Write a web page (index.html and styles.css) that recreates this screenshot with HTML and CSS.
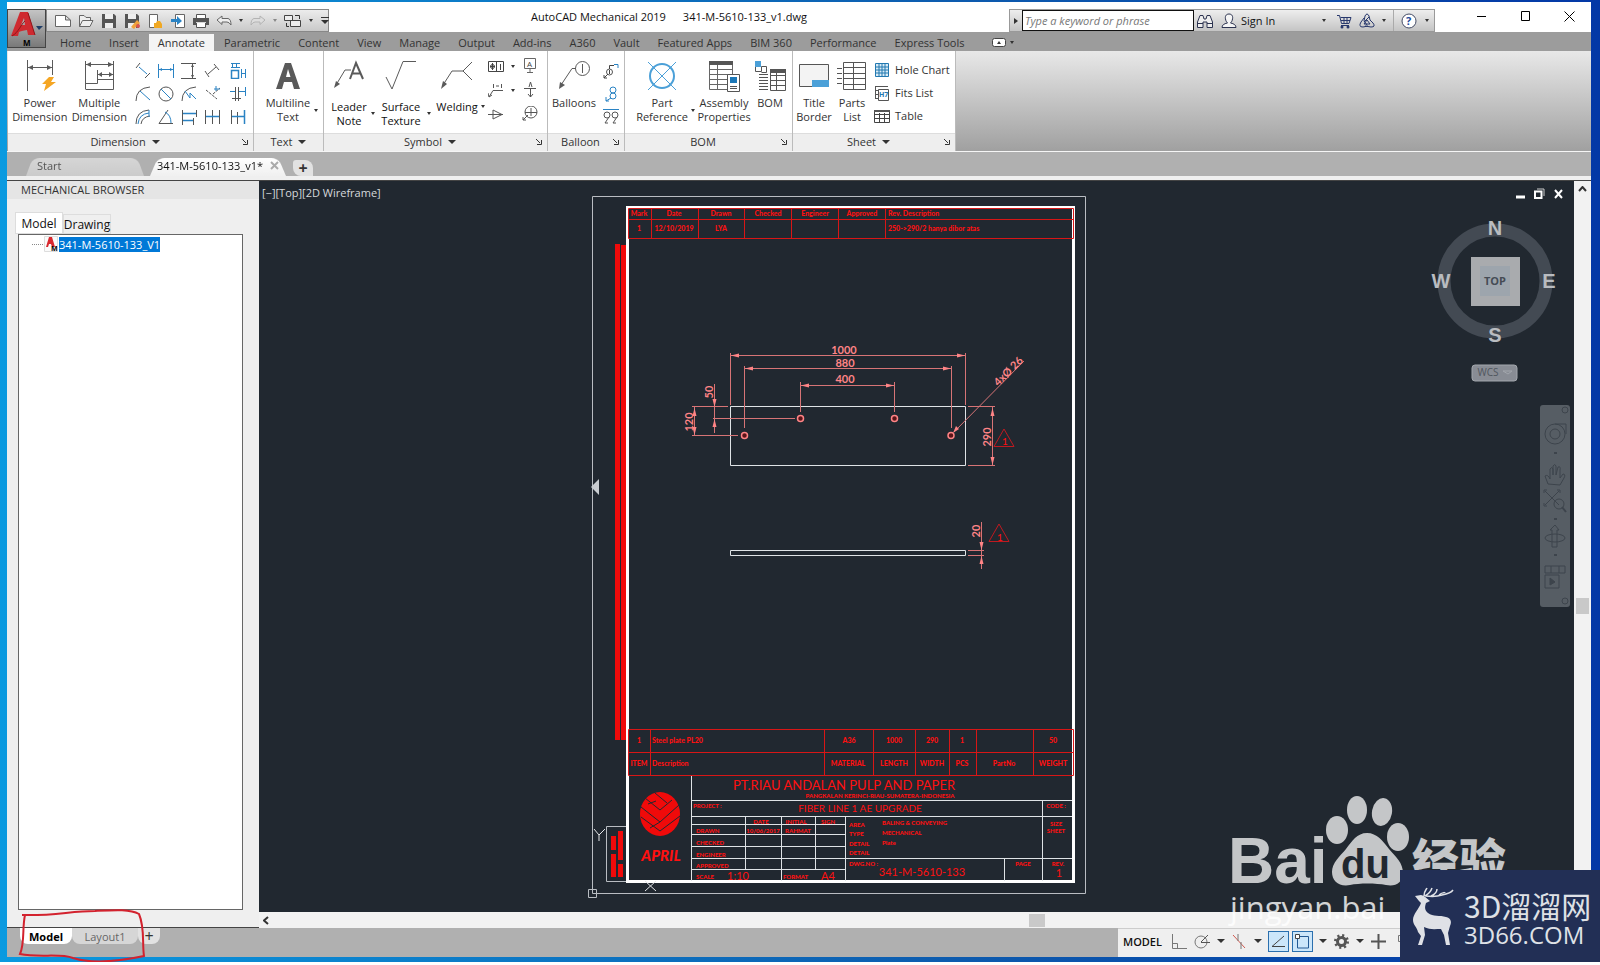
FILE: index.html
```html
<!DOCTYPE html>
<html lang="en">

<head>
    <meta charset="utf-8">
    <meta name="viewport" content="width=device-width, initial-scale=1">
    <title>AutoCAD Mechanical 2019 - 341-M-5610-133_v1.dwg</title>
    <link rel="stylesheet" href="styles.css">
</head>

<body>
    <div class="desktop">
        <div class="window">

            <!-- title bar -->
            <header class="titlebar">
                <button class="app-btn" aria-label="Application menu">
                    <svg width="39" height="39" viewBox="0 0 39 39">
                        <path d="M4 27 L13 3 H21 L28 26 H21 L20 21 C16 22 13 22 12 23 L11 27 Z M14 16 H18 L17 9 Z" fill="#cf2a30" fill-rule="evenodd"/>
                        <path d="M5 27 C12 23 14 15 18 12 M21 4 L28 26" stroke="#8e1519" fill="none"/>
                        <path d="M29 17 H36 L32 21 Z" fill="#1f3c66"/>
                        <text x="16" y="37" font-size="8" font-weight="bold">M</text>
                    </svg>
                </button>
                <div class="qat">
                    <button aria-label="New"><svg width="16" height="16" viewBox="0 0 16 16"><path d="M.5 2.500 H10.500 L15.500 7 V13.500 H.5 Z M10.500 2.500 V7 H15.500" fill="#fff" stroke="#666"/></svg></button>
                    <button aria-label="Open"><svg width="16" height="16" viewBox="0 0 16 16"><path d="M1.500 13.500 V2.500 H6 L8 4.500 H12.500 V7 M1.500 13.500 L4.500 7.500 H15 L12 13.500 Z" fill="#eee" stroke="#666"/></svg></button>
                    <button aria-label="Save"><svg width="16" height="16" viewBox="0 0 16 16"><path d="M1 1 H13 L15 3 V15 H1 Z" fill="#555"/><path d="M4 1 H12 V6 H4 Z M4 10 H12 V15 H4 Z" fill="#eee"/></svg></button>
                    <button aria-label="Save as"><svg width="16" height="16" viewBox="0 0 16 16"><path d="M1 1 H13 L15 3 V15 H1 Z" fill="#555"/><path d="M4 1 H12 V6 H4 Z M4 10 H12 V15 H4 Z" fill="#eee"/><path d="M7 14 L13 7 L16 10 L10 16 Z" fill="#f0a23c"/><circle cx="14" cy="13" r="2" fill="#d9534f"/></svg></button>
                    <button aria-label="Open from web"><svg width="16" height="16" viewBox="0 0 16 16"><path d="M2.500 1.500 H10.500 V14.500 H2.500 Z" fill="#fff" stroke="#666"/><path d="M7 10 H9 L10 8 H13 L15 11 V15 H7 Z" fill="#f0a823"/></svg></button>
                    <button aria-label="Save to mobile"><svg width="16" height="16" viewBox="0 0 16 16"><path d="M5.500 1.500 H14.500 V14.500 H5.500 Z" fill="#fff" stroke="#666"/><path d="M1 6 H7 V3 L12 8 L7 12 V9 H1 Z" fill="#2a83c4"/></svg></button>
                    <button aria-label="Plot"><svg width="16" height="16" viewBox="0 0 16 16"><path d="M3.500 6 V1.500 H12.500 V6 M3.500 10 V14.500 H12.500 V10" fill="#fff" stroke="#555"/><path d="M0 5 H16 V12 H13 V9 H3 V12 H0 Z" fill="#555"/></svg></button>
                    <button aria-label="Undo"><svg width="16" height="16" viewBox="0 0 16 16"><path d="M1 7 L6 3 V5.500 H12 Q15 6 15 12 Q13 9 11 9 H6 V11.500 Z" fill="#eee" stroke="#666"/></svg></button>
                    <i class="caret"></i>
                    <button aria-label="Redo"><svg width="16" height="16" viewBox="0 0 16 16"><path d="M15 7 L10 3 V5.500 H4 Q1 6 1 12 Q3 9 5 9 H10 V11.500 Z" fill="#ddd" stroke="#b3b3b3"/></svg></button>
                    <i class="caret dim"></i>
                    <button aria-label="Workspace"><svg width="18" height="16" viewBox="0 0 18 16"><path d="M.5 2.500 H8.500 V7.500 H.5 Z M6.500 7.500 H16.500 V13.500 H6.500 Z" fill="#eee" stroke="#444"/><path d="M11 2.500 H15.500 V6 M2.500 10 V13.500 H5" fill="none" stroke="#333"/></svg></button>
                    <i class="caret"></i>
                    <button aria-label="Customize"><svg width="10" height="10" viewBox="0 0 10 10"><path d="M1 1.500 H9" stroke="#333"/><path d="M1 4 H9 L5 8 Z" fill="#333"/></svg></button>
                </div>
                <h1 class="win-title"><span>AutoCAD Mechanical 2019</span><span>341-M-5610-133_v1.dwg</span></h1>
                <div class="infocenter">
                    <i class="tri-right"></i>
                    <input type="text" placeholder="Type a keyword or phrase" aria-label="Search">
                    <button aria-label="Find"><svg width="18" height="16" viewBox="0 0 18 16"><path d="M1.500 14.500 V9 L4 2.500 H7 L8 6 H10 L11 2.500 H14 L16.500 9 V14.500 H11 V9 H7 V14.500 Z M1.500 10.500 H7 M11 10.500 H16.500" fill="#eee" stroke="#2c3350"/></svg></button>
                    <button class="signin"><svg width="16" height="16" viewBox="0 0 16 16"><path d="M8 1 C11.500 1 12 4 11.500 6 C11 9 10 9 9.500 10 Q15 11 15 14.500 H1 Q1 11 6.500 10 C6 9 5 9 4.500 6 C4 4 4.500 1 8 1 Z" fill="#f5f5f5" stroke="#2c3350"/></svg>Sign In</button>
                    <i class="caret"></i>
                    <button class="cart" aria-label="App store"><svg width="16" height="16" viewBox="0 0 16 16"><path d="M1 2.500 H3.500 L5.500 10.500 H13 L15 4.500 H4.500 M5 12.500 H13 M8 5 V10 M11 5 V10 M5 7.500 H14" fill="none" stroke="#28386c"/><circle cx="6" cy="14" r="1.500" fill="#28386c"/><circle cx="12" cy="14" r="1.500" fill="#28386c"/></svg></button>
                    <button aria-label="Autodesk"><svg width="16" height="16" viewBox="0 0 16 16"><path d="M6 3 Q8 -1 10 3 L11 7 M5 5 L2 9 Q-1 14 4 14 L9 13 M11 7 L14 10 Q17 14 12 14 L6 13 M6 3 L5 8 L8 12 M10 4 L5 9 M8 7 L11 11 H5 Z" fill="none" stroke="#28386c"/></svg></button>
                    <i class="caret"></i>
                    <button class="help" aria-label="Help"><svg width="18" height="18" viewBox="0 0 18 18"><circle cx="9" cy="9" r="7" fill="#fff" stroke="#444c66"/><text x="6" y="13" font-size="11" font-weight="bold" fill="#1c4a9c">?</text></svg></button>
                    <i class="caret"></i>
                </div>
                <div class="win-btns">
                    <button aria-label="Minimize"><svg width="11" height="11" viewBox="0 0 11 11"><path d="M1 5.500 H10" stroke="#000"/></svg></button>
                    <button aria-label="Maximize"><svg width="11" height="11" viewBox="0 0 11 11"><path d="M1.500 .5 H9.500 V9.500 H1.500 Z" fill="none" stroke="#000"/></svg></button>
                    <button aria-label="Close"><svg width="11" height="11" viewBox="0 0 11 11"><path d="M.5 .5 L10.500 10.500 M10.500 .5 L.5 10.500" stroke="#000"/></svg></button>
                </div>
            </header>

            <!-- ribbon tabs -->
            <nav class="tabs">
                <button>Home</button>
                <button>Insert</button>
                <button class="active">Annotate</button>
                <button>Parametric</button>
                <button>Content</button>
                <button>View</button>
                <button>Manage</button>
                <button>Output</button>
                <button>Add-ins</button>
                <button>A360</button>
                <button>Vault</button>
                <button>Featured Apps</button>
                <button>BIM 360</button>
                <button>Performance</button>
                <button>Express Tools</button>
                <button class="collapse" aria-label="Minimize ribbon"><svg width="14" height="9" viewBox="0 0 14 9"><rect x=".5" y=".5" width="13" height="8" rx="2" fill="#fff" stroke="#444"/><path d="M5 6 L7 3 L9 6 Z" fill="#333"/></svg><i class="caret"></i></button>
            </nav>

            <!-- ribbon -->
            <section class="ribbon">
                <div class="panel dimension">
                    <div class="tools">
                        <button class="big"><svg width="32" height="32" viewBox="0 0 32 32"><path d="M3.500 0 V31 M28.500 0 V15 M4 7.500 H28" stroke="#5a5a5a" fill="none"/><path d="M4 7.500 L9 5 V10 Z M28 7.500 L23 5 V10 Z" fill="#5a5a5a"/><path d="M25 17 L18 24 H22 L20 31 L32 22 H27 L30 17 Z" fill="#f5a623"/></svg>Power<br>Dimension</button>
                        <button class="big"><svg width="32" height="32" viewBox="0 0 32 32"><path d="M2.500 1 V29 M30.500 1 V29 M3 4.500 H30 M14.500 10 V20 M15 14.500 H30 M2.500 23.500 H14.500 V19.500 H30.500 V29.500 H2.500" fill="none" stroke="#5a5a5a"/><path d="M3 4.500 L8 2 V7 Z M30 4.500 L25 2 V7 Z M15 14.500 L19 12 V17 Z M30 14.500 L26 12 V17 Z" fill="#5a5a5a"/></svg>Multiple<br>Dimension</button>
                        <div class="grid-icons">
                            <button aria-label="Aligned"><svg viewBox="0 0 16 16"><path d="M4 4 L12 11" stroke="#2a83c4"/><path d="M1 5 L5 0 M10 15 L15 10" stroke="#555"/></svg></button>
                            <button aria-label="Horizontal"><svg viewBox="0 0 16 16"><path d="M1 6.500 H15" stroke="#2a83c4"/><path d="M.5 1 V15 M15.500 1 V15" stroke="#2a83c4"/><path d="M1 6.500 L4 5 V8 Z M15 6.500 L12 5 V8 Z" fill="#2a83c4"/></svg></button>
                            <button aria-label="Vertical"><svg viewBox="0 0 16 16"><path d="M0 .5 H15 M0 15.500 H15 M11.500 1 V15" stroke="#555"/><path d="M11.500 1 L10 4 H13 Z M11.500 15 L10 12 H13 Z" fill="#555"/></svg></button>
                            <button aria-label="Rotated"><svg viewBox="0 0 16 16"><path d="M4 11 L12 4" stroke="#555"/><path d="M1 8 L5 14 M10 1 L15 7" stroke="#555"/></svg></button>
                            <button aria-label="Automatic"><svg viewBox="0 0 16 16"><path d="M1 .5 H10 M1 4.500 H10 M2.500 1 V5 M6.500 1 V5 M11.500 6 V15 M15.500 6 V15 M11 10.500 H16" stroke="#2a83c4"/><path d="M1.500 7.500 H8.500 V15.500 H1.500 Z" fill="none" stroke="#2a83c4" stroke-width="1.500"/></svg></button>
                            <button aria-label="Radius"><svg viewBox="0 0 16 16"><path d="M1 15 Q1 2 15 1" fill="none" stroke="#555"/><path d="M5 5 L15 14" stroke="#2a83c4"/></svg></button>
                            <button aria-label="Diameter"><svg viewBox="0 0 16 16"><circle cx="8" cy="8" r="7" fill="none" stroke="#555"/><path d="M3 3 L13 13" stroke="#2a83c4"/></svg></button>
                            <button aria-label="Jogged"><svg viewBox="0 0 16 16"><path d="M1 15 Q1 2 15 1" fill="none" stroke="#555"/><path d="M4 5 L9 12 L9 7 L15 13" fill="none" stroke="#2a83c4"/></svg></button>
                            <button aria-label="Chamfer"><svg viewBox="0 0 16 16"><path d="M2 4 L13 13 M9 8 L16 2" stroke="#555" stroke-dasharray="3 1"/><path d="M10 3 H16 M12 0 V5" stroke="#2a83c4"/></svg></button>
                            <button aria-label="Symmetric"><svg viewBox="0 0 16 16"><path d="M0 5.500 H5 M8 5.500 H15 M15.500 1 V10" stroke="#2a83c4"/><path d="M5.500 1 V15 M8.500 1 V15 M2 12.500 H11" stroke="#555"/></svg></button>
                            <button aria-label="Arc length"><svg viewBox="0 0 16 16"><path d="M1 15 Q1 2 14 1 M6 15 Q7 8 15 7" fill="none" stroke="#555"/><path d="M3 15 Q4 5 14 4 M14 1 V8" fill="none" stroke="#2a83c4"/></svg></button>
                            <button aria-label="Angular"><svg viewBox="0 0 16 16"><path d="M10 1 L1 14.500 H15" fill="none" stroke="#555"/><path d="M7 3 Q13 6 13 14" fill="none" stroke="#2a83c4"/></svg></button>
                            <button aria-label="Baseline"><svg viewBox="0 0 16 16"><path d="M1.500 1 V16 M15.500 1 V8 M12.500 9 V16" stroke="#555"/><path d="M2 4.500 H15 M2 11.500 H12" stroke="#2a83c4" stroke-width="1.500"/></svg></button>
                            <button aria-label="Chain"><svg viewBox="0 0 16 16"><path d="M1.500 1 V15 M8.500 1 V15 M15.500 1 V15" stroke="#555"/><path d="M2 7.500 H15" stroke="#2a83c4" stroke-width="1.500"/></svg></button>
                            <button aria-label="Stretch"><svg viewBox="0 0 16 16"><path d="M1.500 1 V15 M7.500 3 V15" stroke="#555"/><path d="M2 7.500 H15 M14.500 1 V15" stroke="#2a83c4" stroke-width="1.500"/></svg></button>
                        </div>
                    </div>
                    <div class="panel-title"><span>Dimension <i class="caret wide"></i></span><button class="launch" aria-label="Dimension settings"><svg width="6" height="6" viewBox="0 0 6 6"><path d="M0 0 L4 4 M5.500 1 V5.500 H1" fill="none" stroke="#333"/></svg></button></div>
                </div>
                <div class="panel text">
                    <div class="tools">
                        <button class="big"><svg width="32" height="32" viewBox="0 0 32 32"><path d="M4 29 L13 3 H19 L28 29 H22 L20 22 H12 L10 29 Z M14 17 H18.500 L16 9 Z" fill="#5a5a5a" fill-rule="evenodd"/></svg>Multiline<br>Text</button>
                        <i class="caret drop"></i>
                    </div>
                    <div class="panel-title"><span>Text <i class="caret wide"></i></span></div>
                </div>
                <div class="panel symbol">
                    <div class="tools">
                        <button class="big low"><svg width="32" height="32" viewBox="0 0 32 32"><path d="M3 25 L12 10 H18" fill="none" stroke="#5a5a5a"/><path d="M1 28 L3 21 L7 24 Z" fill="#5a5a5a"/><path d="M17 19 L23 3 L30 19 M19 13.500 H28" fill="none" stroke="#5a5a5a" stroke-width="2"/></svg>Leader<br>Note</button>
                        <i class="caret drop low"></i>
                        <button class="big low"><svg width="32" height="32" viewBox="0 0 32 32"><path d="M1 17 L7 29 L18 1.500 H31" fill="none" stroke="#5a5a5a"/></svg>Surface<br>Texture</button>
                        <i class="caret drop low"></i>
                        <button class="big low"><svg width="32" height="32" viewBox="0 0 32 32"><path d="M2 25 L11 11 H22 L31 2 M22 11 L31 20" fill="none" stroke="#5a5a5a"/><path d="M0 29 L2 21 L6 24 Z" fill="#5a5a5a"/></svg>Welding</button>
                        <i class="caret drop first"></i>
                        <div class="grid-icons">
                            <button aria-label="Feature control frame"><svg viewBox="0 0 16 16"><path d="M.5 3.500 H15.500 V13.500 H.5 Z M8.500 3.500 V13.500 M2 8.500 H7 M4.500 5 V12 M12.500 6 V12" fill="none" stroke="#444"/><circle cx="4.500" cy="8.500" r="2" fill="none" stroke="#444"/></svg></button>
                            <i class="caret"></i>
                            <button aria-label="Datum identifier"><svg viewBox="0 0 16 16"><path d="M2.500 .5 H13.500 V10.500 H2.500 Z M8 10.500 V14 M5 14.500 H11" fill="none" stroke="#666"/><text x="5" y="9" font-size="8" fill="#444">A</text></svg></button>
                            <button aria-label="Datum target"><svg viewBox="0 0 16 16"><path d="M1 15 L5 8.500 H15 M5.500 2 V6 M8 4 H11 M13.500 2 V6 M0 11 L1 15 L4 13" fill="none" stroke="#555"/></svg></button>
                            <i class="caret"></i>
                            <button aria-label="Edge symbol"><svg viewBox="0 0 16 16"><path d="M2 6.500 H14 M8.500 6 V15 M6 12 L8.500 15 L11 12 M7 5 L8.500 0 L10 5" fill="none" stroke="#555"/></svg></button>
                            <button aria-label="Taper"><svg viewBox="0 0 16 16"><path d="M0 8.500 H15 M5 4 V13 L14 8.500 Z" fill="none" stroke="#555"/></svg></button>
                            <span></span>
                            <button aria-label="Feature identifier"><svg viewBox="0 0 16 16"><circle cx="9" cy="6" r="6" fill="none" stroke="#555"/><path d="M3 6.500 H15 M9 2 V10 M6 9 L1 14 M1 11 V14 H4" fill="none" stroke="#555"/></svg></button>
                        </div>
                    </div>
                    <div class="panel-title"><span>Symbol <i class="caret wide"></i></span><button class="launch" aria-label="Symbol settings"><svg width="6" height="6" viewBox="0 0 6 6"><path d="M0 0 L4 4 M5.500 1 V5.500 H1" fill="none" stroke="#333"/></svg></button></div>
                </div>
                <div class="panel balloon">
                    <div class="tools">
                        <button class="big"><svg width="32" height="32" viewBox="0 0 32 32"><path d="M3 25 L14 8.500 H18" fill="none" stroke="#5a5a5a"/><path d="M1 29 L2 22 L7 25 Z" fill="#5a5a5a"/><circle cx="24.500" cy="8.500" r="7" fill="none" stroke="#5a5a5a"/><path d="M24.500 4 V13" stroke="#5a5a5a"/></svg>Balloons</button>
                        <div class="grid-icons">
                            <button aria-label="Renumber"><svg viewBox="0 0 16 16"><circle cx="6.500" cy="9" r="3" fill="none" stroke="#555"/><path d="M5 11 L1 15 M1 12 V15 H4 M6.500 6 V2.500 H11 M6.500 7 V11" fill="none" stroke="#444"/><path d="M11 1.500 H15 V5" fill="none" stroke="#2a83c4"/></svg></button>
                            <button aria-label="Reorganize"><svg viewBox="0 0 16 16"><circle cx="10" cy="4" r="3" fill="none" stroke="#2a83c4"/><circle cx="10" cy="10" r="3" fill="none" stroke="#2a83c4"/><path d="M8 12 L3 15 M3 11 V15 H6" fill="none" stroke="#2a83c4"/></svg></button>
                            <button aria-label="Arrange"><svg viewBox="0 0 16 16"><path d="M0 .5 H16" stroke="#2a83c4"/><circle cx="4" cy="6" r="3" fill="none" stroke="#555"/><circle cx="12" cy="6" r="3" fill="none" stroke="#555"/><path d="M6 8 L2 14 H5 M14 8 L10 14 H13" fill="none" stroke="#555"/></svg></button>
                        </div>
                    </div>
                    <div class="panel-title"><span>Balloon</span><button class="launch" aria-label="Balloon settings"><svg width="6" height="6" viewBox="0 0 6 6"><path d="M0 0 L4 4 M5.500 1 V5.500 H1" fill="none" stroke="#333"/></svg></button></div>
                </div>
                <div class="panel bom">
                    <div class="tools">
                        <button class="big"><svg width="32" height="32" viewBox="0 0 32 32"><circle cx="16" cy="16" r="12" fill="none" stroke="#4ba0d8" stroke-width="2"/><path d="M2 2 L30 30 M30 2 L2 30" stroke="#4ba0d8"/></svg>Part<br>Reference</button>
                        <i class="caret drop"></i>
                        <button class="big"><svg width="32" height="32" viewBox="0 0 32 32"><path d="M1.500 1.500 H24.500 V29.500 H1.500 Z M1 9.500 H24 M1 14.500 H24 M1 19.500 H24 M1 24.500 H24 M9.500 5 V29" fill="#fff" stroke="#666"/><path d="M1 1 H25 V5 H1 Z" fill="#555"/><path d="M19.500 14.500 H31.500 V31.500 H19.500 Z" fill="#fff" stroke="#555"/><path d="M22 17 H29 V23 H22 Z" fill="#1c78b8"/><path d="M22 26.500 H29 M22 28.500 H29" stroke="#555"/></svg>Assembly<br>Properties</button>
                        <button class="big"><svg width="32" height="32" viewBox="0 0 32 32"><path d="M1 1 H7 V7 H1 Z" fill="#4ba0d8"/><path d="M1.500 7 V11.500 H7.500 V6.500 H12.500 V12.500 H7.500 M5 14.500 H14 M5 17.500 H14 M5 20.500 H14 M5 23.500 H14 M5 26.500 H14 M5 29.500 H14" fill="none" stroke="#555"/><path d="M16.500 9.500 H31.500 V30.500 H16.500 Z M16 15.500 H31 M16 20.500 H31 M16 25.500 H31 M22.500 12 V30" fill="none" stroke="#555"/><path d="M16 9 H32 V13 H16 Z" fill="#555"/></svg>BOM</button>
                    </div>
                    <div class="panel-title"><span>BOM</span><button class="launch" aria-label="BOM settings"><svg width="6" height="6" viewBox="0 0 6 6"><path d="M0 0 L4 4 M5.500 1 V5.500 H1" fill="none" stroke="#333"/></svg></button></div>
                </div>
                <div class="panel sheet">
                    <div class="tools">
                        <button class="big"><svg width="32" height="32" viewBox="0 0 32 32"><path d="M1.500 4.500 H30.500 V26.500 H1.500 Z" fill="#f3f3f3" stroke="#555"/><path d="M14 20 H31 V27 H14 Z" fill="#4ba0d8"/></svg>Title<br>Border</button>
                        <button class="big"><svg width="32" height="32" viewBox="0 0 32 32"><path d="M7.500 2.500 H29.500 V29.500 H7.500 Z M8 7.500 H29 M8 13.500 H29 M8 18.500 H29 M8 24.500 H29 M17.500 3 V29 M1 8.500 H6 M1 13.500 H6 M1 18.500 H6 M1 23.500 H6" fill="#fff" stroke="#555"/></svg>Parts<br>List</button>
                        <div class="list">
                            <button><svg width="16" height="16" viewBox="0 0 16 16"><path d="M1.500 1.500 H14.500 V14.500 H1.500 Z M1 5 H15 M1 8 H15 M1 11 H15 M5 1 V15 M8 1 V15 M11 1 V15" fill="#d9ecf7" stroke="#2378b0"/></svg>Hole Chart</button>
                            <button><svg width="16" height="16" viewBox="0 0 16 16"><path d="M1 1.500 H14 M1.500 1 V14 M4.500 4.500 H14.500 V15.500 H4.500 Z M1 5.500 H4 M1 9.500 H4 M1 13.500 H4" fill="none" stroke="#555"/><text x="5" y="12" font-size="7" font-weight="bold" fill="#2378b0">H7</text></svg>Fits List</button>
                            <button><svg width="16" height="16" viewBox="0 0 16 16"><path d="M.5 2.500 H15.500 V14.500 H.5 Z M0 6.500 H16 M0 10.500 H16 M5.500 5 V14 M10.500 5 V14" fill="none" stroke="#444"/><path d="M0 2 H16 V4 H0 Z" fill="#555"/></svg>Table</button>
                        </div>
                    </div>
                    <div class="panel-title"><span>Sheet <i class="caret wide"></i></span><button class="launch" aria-label="Sheet settings"><svg width="6" height="6" viewBox="0 0 6 6"><path d="M0 0 L4 4 M5.500 1 V5.500 H1" fill="none" stroke="#333"/></svg></button></div>
                </div>
            </section>

            <!-- document tabs -->
            <nav class="doc-tabs">
                <button class="doc-tab start">Start</button>
                <button class="doc-tab current">341-M-5610-133_v1* <svg width="9" height="9" viewBox="0 0 9 9"><path d="M1 1 L8 8 M8 1 L1 8" stroke="#aaa" stroke-width="2"/></svg></button>
                <button class="doc-add" aria-label="New tab">+</button>
            </nav>

            <main class="work">
                <aside class="browser">
                    <h2>MECHANICAL BROWSER</h2>
                    <div class="side-tabs">
                        <button class="active">Model</button>
                        <button>Drawing</button>
                    </div>
                    <div class="tree">
                        <a href="#" class="node"><svg width="28" height="16" viewBox="0 0 28 16"><path d="M1 8.500 H14" stroke="#888" stroke-dasharray="1 1"/><path d="M13.500 .5 H26.500 V15.500 H13.500 Z" fill="#fafafa" stroke="#ddd"/><path d="M15 11 L18 1 H21 L24 11 H21 L20 8 H18 L17 11 Z" fill="#d8282e"/><text x="20" y="15" font-size="7" font-weight="bold">M</text></svg><span>341-M-5610-133_V1</span></a>
                    </div>
                </aside>

                <div class="viewport">
                    <div class="canvas">
                        <svg class="drawing" viewBox="259 181 1315 731">
                            <!-- paper and frame -->
                            <g fill="none" stroke="#b9bdc2">
                                <path d="M592.500 196.500 H1085.500 V893.500 H592.500 Z M588.500 889.500 H596.500 V897.500 H588.500 Z"/>
                                <path d="M627.500 826.500 H606.500 V881.500 H627.500"/>
                            </g>
                            <path d="M627.500 207.500 H1073.500 V881.500 H627.500 Z" fill="none" stroke="#fff" stroke-width="3"/>
                            <path d="M615 244 H620 V740 H615 Z M621 245 H626 V740 H621 Z" fill="#f00a0a"/>
                            <path d="M611 836 H616 V850 H611 Z M618 831 H623 V860 H618 Z M611 854 H616 V877 H611 Z M618 864 H623 V877 H618 Z" fill="#f00a0a"/>
                            <path d="M599 479 V495 L591 487 Z" fill="#c9cdd1"/>
                            <path d="M594 829 L599 835 L605 829 M599 835 V841 M645 881 L656 891 M656 881 L645 891" fill="none" stroke="#e4e6e8"/>

                            <!-- revision table -->
                            <path d="M628.500 208.500 H1073.500 V238.500 H628.500 Z M628 219.500 H1073 M651.500 208 V238 M698.500 208 V238 M744.500 208 V238 M791.500 208 V238 M838.500 208 V238 M885.500 208 V238" fill="none" stroke="#d81616"/>
                            <g class="cad tiny">
                                <text x="639" y="216">Mark</text>
                                <text x="674" y="216">Date</text>
                                <text x="721" y="216">Drawn</text>
                                <text x="768" y="216">Checked</text>
                                <text x="815" y="216">Engineer</text>
                                <text x="862" y="216">Approved</text>
                                <text x="888" y="216" class="left">Rev. Description</text>
                                <text x="639" y="231">1</text>
                                <text x="674" y="231">12/10/2019</text>
                                <text x="721" y="231">LYA</text>
                                <text x="888" y="231" class="left">250-&gt;290/2 hanya dibor atas</text>
                            </g>

                            <!-- plate, front and side -->
                            <path d="M730.500 406.500 H965.500 V465.500 H730.500 Z M730.500 550.500 H965.500 V555.500 H730.500 Z" fill="none" stroke="#dfe3e6"/>
                            <g fill="none" stroke="#d77476">
                                <path d="M730.500 353 V405 M965.500 353 V405 M731 355.500 H965"/>
                                <path d="M744.500 366 V428 M951.500 366 V428 M745 368.500 H951"/>
                                <path d="M800.500 382 V412 M894.500 382 V412 M801 385.500 H894"/>
                                <path d="M714.500 384 V433 M713 418.500 H795"/>
                                <path d="M694.500 407 V435 M692 406.500 H728 M692 435.500 H738"/>
                                <path d="M992.500 407 V465 M968 406.500 H995 M968 465.500 H995"/>
                                <path d="M1024 361 L954 432"/>
                                <path d="M981.500 522 V569 M968 550.500 H984 M968 555.500 H984"/>
                            </g>
                            <path fill="#ff8486" d="M731 355.500 l8 -2 v4 Z M965 355.500 l-8 -2 v4 Z M745 368.500 l8 -2 v4 Z M951 368.500 l-8 -2 v4 Z M801 385.500 l8 -2 v4 Z M894 385.500 l-8 -2 v4 Z M714.500 407 l-2 -8 h4 Z M714.500 419 l-2 8 h4 Z M694.500 408 l-2 8 h4 Z M694.500 435 l-2 -8 h4 Z M992.500 408 l-2 8 h4 Z M992.500 465 l-2 -8 h4 Z M953 433 l3 -7 l3 3 Z M981.500 550 l-2 -8 h4 Z M981.500 556 l-2 8 h4 Z"/>
                            <g fill="#5a1418" stroke="#ff8486" stroke-width="1.500">
                                <circle cx="800.500" cy="418.500" r="3"/>
                                <circle cx="894.500" cy="418.500" r="3"/>
                                <circle cx="744.500" cy="435.500" r="3"/>
                                <circle cx="951" cy="435.500" r="3"/>
                            </g>
                            <g class="cad dim">
                                <text x="844" y="354">1000</text>
                                <text x="845" y="367">880</text>
                                <text x="845" y="383">400</text>
                                <text transform="translate(713 392) rotate(-90)">50</text>
                                <text transform="translate(693 422) rotate(-90)">120</text>
                                <text transform="translate(991 437) rotate(-90)">290</text>
                                <text transform="translate(980 531) rotate(-90)">20</text>
                                <text transform="translate(1011 374) rotate(-45)">4xØ 26</text>
                            </g>
                            <path d="M1004 429 L1014 446.500 H994 Z M999 524 L1009 541.500 H989 Z" fill="none" stroke="#c01a20"/>
                            <g class="cad small">
                                <text x="1005" y="445">1</text>
                                <text x="1000" y="541">1</text>
                            </g>

                            <!-- parts list -->
                            <path d="M628.500 729.500 H1073.500 V775.500 H628.500 Z M628 752.500 H1073 M650.500 729 V775 M824.500 729 V775 M873.500 729 V775 M915.500 729 V775 M949.500 729 V775 M976.500 729 V775 M1033.500 729 V775" fill="none" stroke="#d81616"/>
                            <g class="cad tiny">
                                <text x="639" y="743">1</text>
                                <text x="652" y="743" class="left">Steel plate PL20</text>
                                <text x="849" y="743">A36</text>
                                <text x="894" y="743">1000</text>
                                <text x="932" y="743">290</text>
                                <text x="962" y="743">1</text>
                                <text x="1053" y="743">50</text>
                                <text x="639" y="766">ITEM</text>
                                <text x="652" y="766" class="left">Description</text>
                                <text x="848" y="766">MATERIAL</text>
                                <text x="894" y="766">LENGTH</text>
                                <text x="932" y="766">WIDTH</text>
                                <text x="962" y="766">PCS</text>
                                <text x="1004" y="766">PartNo</text>
                                <text x="1053" y="766">WEIGHT</text>
                            </g>

                            <!-- title block -->
                            <path d="M691.500 776 V881 M691 800.500 H1072 M691 816.500 H1072 M1042.500 801 V881 M691 824.500 H846 M691 834.500 H846 M691 846.500 H846 M691 858.500 H1072 M691 869.500 H846 M745.500 817 V870 M781.500 817 V881 M815.500 817 V870 M845.500 817 V881 M1004.500 858 V881" fill="none" stroke="#dfe3e6"/>
                            <ellipse cx="660" cy="814" rx="20" ry="22" fill="#f00a0a"/>
                            <path d="M645 798 L660 810 L672 800 M641 807 L660 822 L679 805 M641 817 L660 831 L680 816 M655 793 L667 803 M648 804 L656 801 M660 822 L650 828" fill="none" stroke="#212830"/>
                            <text x="661" y="861" class="cad logo">APRIL</text>
                            <g class="cad">
                                <text x="844" y="790" class="name">PT.RIAU ANDALAN PULP AND PAPER</text>
                                <text x="860" y="812" class="project">FIBER LINE 1 AE UPGRADE</text>
                                <text x="922" y="876" class="dwg">341-M-5610-133</text>
                                <text x="738" y="880" class="dwg">1:10</text>
                                <text x="828" y="880" class="dwg">A4</text>
                                <text x="1059" y="877" class="dwg">1</text>
                            </g>
                            <g class="cad micro">
                                <text x="880" y="798">PANGKALAN KERINCI-RIAU-SUMATERA-INDONESIA</text>
                                <text x="693" y="808" class="left">PROJECT :</text>
                                <text x="1056" y="808">CODE :</text>
                                <text x="761" y="824">DATE</text>
                                <text x="796" y="824">INITIAL</text>
                                <text x="828" y="824">SIGN</text>
                                <text x="696" y="833" class="left">DRAWN</text>
                                <text x="763" y="833">10/06/2017</text>
                                <text x="798" y="833">RAHMAT</text>
                                <text x="696" y="845" class="left">CHECKED</text>
                                <text x="696" y="857" class="left">ENGINEER</text>
                                <text x="696" y="868" class="left">APPROVED</text>
                                <text x="696" y="879" class="left">SCALE</text>
                                <text x="783" y="879" class="left">FORMAT</text>
                                <text x="849" y="827" class="left">AREA</text>
                                <text x="882" y="825" class="left">BALING &amp; CONVEYING</text>
                                <text x="849" y="836" class="left">TYPE</text>
                                <text x="882" y="835" class="left">MECHANICAL</text>
                                <text x="849" y="846" class="left">DETAIL</text>
                                <text x="882" y="845" class="left">Plate</text>
                                <text x="849" y="855" class="left">DETAIL</text>
                                <text x="849" y="866" class="left">DWG.NO :</text>
                                <text x="1056" y="826">SIZE</text>
                                <text x="1056" y="833">SHEET</text>
                                <text x="1023" y="866">PAGE</text>
                                <text x="1058" y="866">REV.</text>
                            </g>
                        </svg>

                        <div class="vp-label">[−][Top][2D Wireframe]</div>
                        <div class="vp-btns">
                            <button aria-label="Minimize drawing"><svg width="11" height="11" viewBox="0 0 11 11"><path d="M1 9 H10" stroke="#fff" stroke-width="3"/></svg></button>
                            <button aria-label="Restore drawing"><svg width="11" height="11" viewBox="0 0 11 11"><path d="M1 3.500 H7.500 V10 H1 Z" fill="none" stroke="#fff" stroke-width="2"/><path d="M3 1 H10 V8" fill="none" stroke="#ccc"/></svg></button>
                            <button aria-label="Close drawing"><svg width="11" height="11" viewBox="0 0 11 11"><path d="M2 2 L9 10 M9 2 L2 10" stroke="#fff" stroke-width="2"/></svg></button>
                        </div>
                        <div class="viewcube">
                            <svg width="130" height="170" viewBox="0 0 130 170">
                                <circle cx="65" cy="65" r="51" fill="none" stroke="#434a53" stroke-width="13"/>
                                <rect x="41" y="41" width="49" height="49" fill="#a9abae"/>
                                <rect x="50" y="50" width="30" height="30" fill="#9da5ad"/>
                                <text x="65" y="69" class="face">TOP</text>
                                <text x="65" y="19" class="compass">N</text>
                                <text x="65" y="126" class="compass">S</text>
                                <text x="11" y="72" class="compass">W</text>
                                <text x="119" y="72" class="compass">E</text>
                                <rect x="42" y="149" width="45" height="16" rx="3" fill="#888c94" stroke="#a2a6ac"/>
                                <text x="58" y="160" class="wcs">WCS</text>
                                <path d="M73 155 H82 L78 158 Z" fill="none" stroke="#a2a6ac"/>
                            </svg>
                        </div>
                        <div class="navbar">
                            <svg width="30" height="202" viewBox="0 0 30 202" fill="none" stroke="#3d444c">
                                <circle cx="25" cy="5" r="3"/>
                                <circle cx="15" cy="29" r="10"/><circle cx="15" cy="29" r="5"/><path d="M15 19 H26 V29"/>
                                <path d="M8 79 L5 71 Q8 69 10 74 V64 Q12 61 13 64 V70 V61 Q15 58 16 61 V70 L18 62 Q21 61 20 65 V73 L23 69 Q26 69 24 73 L20 80 Z"/>
                                <path d="M5 86 L19 100 M19 86 L5 100 M4 88 V85 H7 M17 85 H20 V88 M4 98 V101 H7"/><circle cx="19" cy="99" r="5"/><path d="M22 102 L26 107" stroke-width="2"/>
                                <ellipse cx="15" cy="133" rx="10" ry="4"/><path d="M12 142 V125 H10 L15 120 L19 125 H17 V142 Z"/>
                                <path d="M5 161 H25 V168 H5 Z M11 161 V168 M19 161 V168 M5 170 H19 V183 H5 Z"/><path d="M10 173 L15 177 L10 180 Z" fill="#3d444c"/>
                                <path d="M14 48 H17 M14 114 H17 M14 150 H17" stroke-width="2"/>
                                <circle cx="25" cy="196" r="3"/>
                            </svg>
                        </div>
                    </div>
                    <div class="vscroll"><svg width="9" height="6" viewBox="0 0 9 6"><path d="M1 5 L4.500 1 L8 5" fill="none" stroke="#333" stroke-width="2"/></svg><i></i></div>
                    <div class="hscroll"><svg width="6" height="9" viewBox="0 0 6 9"><path d="M5 1 L1 4.500 L5 8" fill="none" stroke="#333" stroke-width="2"/></svg><i></i></div>
                </div>
            </main>

            <!-- layout tabs and status bar -->
            <footer class="bottom">
                <button class="layout-tab current">Model</button>
                <button class="layout-tab">Layout1</button>
                <button class="layout-tab add" aria-label="New layout">+</button>
                <div class="status">
                    <button class="model">MODEL</button>
                    <button aria-label="Ortho"><svg width="17" height="17" viewBox="0 0 17 17"><path d="M1.500 1 V15.500 H16 M2 10.500 H6.500 V15" fill="none" stroke="#777"/></svg></button>
                    <button aria-label="Polar"><svg width="17" height="17" viewBox="0 0 17 17"><circle cx="7" cy="9" r="6" fill="none" stroke="#777"/><path d="M7 9 L14 2 M7 9.500 H16" stroke="#555"/></svg></button>
                    <i class="caret wide"></i>
                    <button aria-label="Isodraft"><svg width="17" height="17" viewBox="0 0 17 17"><path d="M2 2 L14 15" stroke="#d05a50"/><path d="M7 1 V8 M10 9 V16" stroke="#777"/></svg></button>
                    <i class="caret wide"></i>
                    <button class="on" aria-label="Snap tracking"><svg width="17" height="17" viewBox="0 0 17 17"><path d="M14 3 L2 13.500 H15" fill="none" stroke="#444"/></svg></button>
                    <button class="on" aria-label="Object snap"><svg width="17" height="17" viewBox="0 0 17 17"><path d="M3.500 3.500 H14.500 V15 H3.500 Z" fill="none" stroke="#245a94"/><path d="M1.500 1.500 H5.500 V5.500 H1.500 Z" fill="#fff" stroke="#444"/></svg></button>
                    <i class="caret wide"></i>
                    <button aria-label="Settings"><svg width="17" height="17" viewBox="0 0 17 17"><circle cx="8.500" cy="8.500" r="4" fill="none" stroke="#555" stroke-width="3"/><circle cx="8.500" cy="8.500" r="6" fill="none" stroke="#555" stroke-width="3" stroke-dasharray="2 2.700"/></svg></button>
                    <i class="caret wide"></i>
                    <button aria-label="Annotation monitor"><svg width="17" height="17" viewBox="0 0 17 17"><path d="M1 8.500 H16 M8.500 1 V16" stroke="#555" stroke-width="2"/></svg></button>
                    <button aria-label="Units"><svg width="17" height="17" viewBox="0 0 17 17"><path d="M5.500 2.500 H15.500 V8.500 H5.500 Z" fill="none" stroke="#777"/></svg></button>
                </div>
            </footer>
        </div>

        <!-- pen mark round the layout tabs -->
        <svg class="pen" width="140" height="60" viewBox="0 0 140 60"><path d="M10 7 C7 20 10 35 5 46 C25 50 45 45 58 50 C80 57 110 52 129 48 C127 35 130 20 124 6 C115 1 100 2 80 3 C55 3 40 8 7 7" fill="none" stroke="#d3222e" stroke-width="2"/></svg>

        <svg class="baidu" width="290" height="140" viewBox="0 0 290 140" fill="#c4c6c8">
            <text x="2" y="86" class="bai">Bai</text>
            <ellipse cx="111" cy="33" rx="11" ry="14"/>
            <ellipse cx="131" cy="13" rx="10" ry="14"/>
            <ellipse cx="156" cy="15" rx="10" ry="14" transform="rotate(10 156 15)"/>
            <ellipse cx="172" cy="40" rx="11" ry="14"/>
            <path d="M141 36 C151 36 157 44 163 52 C170 60 177 66 177 76 C177 86 169 90 160 88 C150 86 133 86 124 88 C113 90 106 84 106 75 C106 66 114 59 120 52 C126 44 131 36 141 36 Z"/>
            <text x="115" y="81" class="du">du</text>
            <text x="186" y="81" class="jy">经验</text>
            <text x="4" y="122" class="url">jingyan.bai</text>
        </svg>

        <div class="badge">
            <svg width="46" height="62" viewBox="0 0 46 62"><path d="M9 8 L3 9 L7 14 L9 16 C7 22 1 27 1 33 C1 38 5 40 6 45 L9 49 L6 58 H10 L13 48 L12 40 C18 43 23 42 29 42 L32 48 L34 58 H38 L36 46 L38 39 C40 35 39 31 34 30 C28 28 21 30 16 26 C12 23 13 19 14 16 L18 14 L12 9 Z" fill="#dfe1e6"/><path d="M12 9 C12 4 14 3 15 1 M13 9 C18 6 19 4 20 1 M14 9 C22 10 27 9 30 8 C35 7 39 6 41 3 M19 9 C24 7 25 5 25 2 M27 8 C30 5 33 6 33 5" fill="none" stroke="#dfe1e6" stroke-width="1.500"/></svg>
            <div><strong>3D溜溜网</strong><span>3D66.COM</span></div>
        </div>
    </div>
</body>

</html>
```
FILE: styles.css
```css
* {
    box-sizing: border-box;
}

body {
    margin: 0;
    background-color: #fff;
    font-family: "Open Sans", "Noto Sans CJK SC", sans-serif;
    font-size: 11px;
    color: #333;
}

button {
    border: 0;
    padding: 0;
    background: none;
    font: inherit;
    color: inherit;
    display: flex;
    align-items: center;
    justify-content: center;
    white-space: nowrap;
}

svg {
    flex: none;
    display: block;
}

.desktop {
    position: relative;
    height: calc(100vh - 3px);
    min-height: 700px;
    padding: 2px 9px 5px 7px;
    background: linear-gradient(90deg, #0a9ae0, #0d5bae 60%, #0338a6);
}

.window {
    display: flex;
    flex-direction: column;
    height: 100%;
    background-color: #efefef;
}

.caret {
    flex: none;
    display: inline-block;
    border: 2px solid transparent;
    border-top: 3px solid #333;
    border-bottom: 0;
}

.caret.wide {
    border-width: 4px 4px 0;
}

.caret.dim {
    border-top-color: #888;
}

/* title bar */
.titlebar {
    position: relative;
    display: flex;
    height: 30px;
    background-color: #fff;
}

.app-btn {
    width: 39px;
    height: 39px;
    margin-top: 7px;
    background: linear-gradient(#c6c6c6, #777);
    outline: 1px solid #444;
    outline-offset: -1px;
    z-index: 2;
}

.qat {
    display: flex;
    align-items: center;
    gap: 7px;
    width: 283px;
    height: 23px;
    margin-top: 7px;
    padding-left: 8px;
    background: linear-gradient(#ececec, #c9c9c9);
    border: 1px solid #888;
}

.win-title {
    display: flex;
    gap: 17px;
    margin: 0 auto;
    line-height: 30px;
    font-size: 11px;
    font-weight: normal;
    color: #111;
}

.infocenter {
    display: flex;
    align-items: center;
    gap: 7px;
    width: 426px;
    height: 23px;
    margin-top: 7px;
    background: linear-gradient(#eee, #c4c4c4);
    border: 1px solid #999;
}

.infocenter input {
    width: 172px;
    height: 21px;
    margin-right: -5px;
    padding: 0 2px;
    border: 1px solid #111;
    background-color: #fff;
    font: italic 11px "Open Sans", sans-serif;
}

.infocenter input::placeholder {
    color: #777;
}

.tri-right {
    margin-left: 4px;
    margin-right: -3px;
    border: 3px solid transparent;
    border-left: 4px solid #333;
    border-right: 0;
}

.signin {
    gap: 4px;
    margin-right: auto;
    color: #111;
}

.cart {
    margin-left: 3px;
}

.help {
    height: 21px;
    padding-left: 6px;
    border-left: 1px solid #aaa;
}

.infocenter .caret:last-child {
    margin-right: 5px;
}

.win-btns {
    display: flex;
    width: 156px;
    padding-left: 24px;
}

.win-btns button {
    width: 44px;
    height: 28px;
}

/* ribbon tabs */
.tabs {
    display: flex;
    align-items: flex-end;
    height: 19px;
    padding-left: 44px;
    background-color: #9c9c9c;
}

.tabs button {
    height: 17px;
    padding: 0 9px 1px;
}

.tabs .active {
    margin: 0 1px;
    background-color: #f4f4f4;
}

.tabs .collapse {
    gap: 4px;
    margin-left: 10px;
}

/* ribbon */
.ribbon {
    display: flex;
    height: 101px;
    padding-left: 1px;
    background: linear-gradient(#e8e8e8, #a0a0a0);
    border-bottom: 1px solid #f5f5f5;
}

.panel {
    display: flex;
    flex-direction: column;
    background-color: #fff;
    border-right: 1px solid #bbb;
}

.dimension {
    width: 246px;
}

.text {
    width: 70px;
}

.symbol {
    width: 224px;
}

.balloon {
    width: 77px;
}

.bom {
    width: 168px;
}

.sheet {
    width: 163px;
}

.tools {
    display: flex;
    flex: 1;
}

.dimension .tools,
.balloon .tools,
.sheet .tools {
    padding-left: 2px;
}

.text .tools,
.bom .tools {
    padding-left: 10px;
}

.symbol .tools {
    padding-left: 5px;
}

.big {
    flex-direction: column;
    justify-content: flex-start;
    width: 48px;
    padding-top: 9px;
    line-height: 14px;
}

.big svg {
    margin-bottom: 4px;
}

.big.low {
    color: #111;
}

.big.low svg {
    margin-bottom: 8px;
}

.dimension .big {
    width: 60px;
}

.bom .big {
    width: 54px;
}

.bom .big:last-child {
    width: 38px;
}

.sheet .big {
    width: 38px;
}

.symbol .big:first-child {
    width: 40px;
}

.drop {
    margin: 58px 2px 0;
}

.drop.low {
    margin-top: 61px;
}

.drop.first {
    margin: 54px 0 0;
}

.grid-icons {
    display: grid;
    grid-template-columns: repeat(4, 23px) 30px;
    grid-auto-rows: 23px;
    align-items: center;
    justify-items: center;
    padding: 8px 0 0 2px;
}

.grid-icons svg {
    width: 16px;
    height: 16px;
    fill: none;
}

.symbol .grid-icons {
    grid-template-columns: 22px 12px 22px;
    grid-auto-rows: 24px;
    padding: 3px 0 0;
}

.balloon .grid-icons {
    grid-template-columns: 22px;
}

.list {
    display: flex;
    flex-direction: column;
    padding: 7px 0 0 3px;
}

.list button {
    justify-content: flex-start;
    gap: 5px;
    height: 23px;
}

.panel-title {
    display: flex;
    align-items: center;
    height: 18px;
    padding-bottom: 2px;
    background-color: #eee;
    border-top: 1px solid #ddd;
}

.panel-title span {
    flex: 1;
    display: flex;
    align-items: center;
    justify-content: center;
    gap: 6px;
}

.launch {
    margin-right: 5px;
}

/* document tabs */
.doc-tabs {
    display: flex;
    align-items: flex-end;
    height: 28px;
    padding: 0 0 4px 16px;
    background: linear-gradient(#b0b0b0 24px, #efefef 24px);
}

.doc-tab {
    position: relative;
    height: 21px;
    z-index: 1;
}

.doc-tab::before {
    content: "";
    position: absolute;
    inset: 0 3px;
    background: linear-gradient(#d6d6d6, #cbcbcb);
    border-radius: 8px 8px 0 0;
    transform: perspective(40px) rotateX(14deg);
    transform-origin: bottom;
    z-index: -1;
}

.start {
    width: 124px;
    padding-left: 14px;
    justify-content: flex-start;
    color: #555;
}

.current.doc-tab {
    gap: 7px;
    width: 142px;
    color: #111;
}

.current.doc-tab::before {
    background: linear-gradient(#fff, #f0f0f0);
}

.doc-add {
    width: 20px;
    height: 16px;
    margin-left: 4px;
    background-color: #e2e2e2;
    border-radius: 3px 8px 0 8px;
    font-size: 16px;
    font-weight: bold;
}

/* work area */
.work {
    flex: 1;
    display: flex;
    min-height: 0;
    border-top: 1px solid #444;
}

.browser {
    display: flex;
    flex-direction: column;
    width: 252px;
    padding-bottom: 17px;
    border-bottom: 1px solid #444;
}

.browser h2 {
    margin: 0 0 13px;
    padding-left: 14px;
    line-height: 18px;
    background-color: #e5e5e5;
    font-size: 11px;
    font-weight: normal;
}

.side-tabs {
    display: flex;
    align-items: flex-end;
    padding-left: 8px;
    font-size: 12px;
    color: #111;
}

.side-tabs button {
    width: 48px;
    height: 20px;
    border: 1px solid #ddd;
}

.side-tabs .active {
    height: 22px;
    background-color: #fff;
}

.tree {
    flex: 1;
    margin: 0 16px 0 11px;
    padding: 1px 0 0 12px;
    background-color: #fff;
    border: 1px solid #666;
}

.node {
    display: flex;
    align-items: center;
    color: #fff;
    font-size: 11px;
    text-decoration: none;
}

.node span {
    background-color: #0078d7;
    line-height: 15px;
}

.viewport {
    flex: 1;
    display: grid;
    grid-template-columns: 1fr 17px;
    grid-template-rows: 1fr 16px;
    min-width: 0;
}

.canvas {
    position: relative;
    background-color: #212830;
    overflow: hidden;
}

.drawing {
    position: absolute;
    width: 100%;
    height: 100%;
}

.cad {
    fill: #ff1010;
    font-family: Lato, sans-serif;
    text-anchor: middle;
}

.cad .left {
    text-anchor: start;
}

.tiny {
    font-size: 7px;
    font-weight: 900;
}

.micro {
    font-size: 6px;
    font-weight: 900;
}

.small {
    font-size: 10px;
}

.dim {
    fill: #ff8486;
    font-size: 11px;
    font-weight: bold;
}

.name {
    font-size: 13px;
}

.project {
    font-size: 10px;
}

.dwg {
    font-size: 11px;
}

.logo {
    font-size: 15px;
    font-weight: 900;
    font-style: italic;
}

.vp-label {
    position: absolute;
    top: 4px;
    left: 3px;
    color: #d6d9dc;
}

.vp-btns {
    position: absolute;
    top: 7px;
    right: 10px;
    display: flex;
    gap: 8px;
}

.viewcube {
    position: absolute;
    top: 35px;
    right: 14px;
}

.face {
    font-size: 11px;
    font-weight: bold;
    fill: #454c55;
    text-anchor: middle;
}

.compass {
    font: bold 20px "Liberation Sans", sans-serif;
    fill: #b9bcc0;
    text-anchor: middle;
}

.wcs {
    font-size: 10px;
    fill: #50565e;
    text-anchor: middle;
}

.navbar {
    position: absolute;
    top: 224px;
    right: 4px;
    background-color: #565d64;
    border-radius: 3px;
}

.vscroll,
.hscroll {
    display: flex;
    align-items: center;
    background-color: #f2f2f2;
}

.vscroll {
    flex-direction: column;
    padding-top: 5px;
}

.hscroll {
    grid-column: 1 / 3;
    padding-left: 4px;
}

.vscroll i {
    width: 13px;
    height: 16px;
    margin-top: 406px;
    background-color: #c9c9c9;
}

.hscroll i {
    width: 16px;
    height: 13px;
    margin-left: 760px;
    background-color: #c9c9c9;
}

/* bottom bar */
.bottom {
    display: flex;
    height: 29px;
    padding-left: 13px;
    background-color: #b0b0b0;
}

.layout-tab {
    width: 66px;
    height: 16px;
    background-color: #d6d6d6;
    border-radius: 0 0 8px 8px;
    color: #666;
}

.layout-tab.current {
    width: 52px;
    background-color: #fff;
    color: #000;
    font-weight: bold;
}

.layout-tab.add {
    width: 22px;
    background-color: #e2e2e2;
    color: #333;
    font-size: 16px;
}

.status {
    display: flex;
    align-items: center;
    gap: 6px;
    width: 473px;
    margin-left: auto;
    padding: 0 0 4px 5px;
    background-color: #efefef;
    border-top: 1px solid #ccc;
}

.status .model {
    margin-right: 3px;
    font-weight: 600;
    color: #111;
}

.status .on {
    width: 21px;
    height: 21px;
    margin-right: -3px;
    background-color: #cce6fa;
    border: 1px solid #2a6fae;
}

.status .on + .caret {
    margin-left: 3px;
}

/* overlays */
.pen {
    position: absolute;
    left: 15px;
    bottom: -6px;
}

.baidu {
    position: absolute;
    right: 84px;
    bottom: 25px;
    overflow: visible;
}

.bai {
    font: bold 64px "Liberation Sans", sans-serif;
}

.du {
    font: bold 40px "Liberation Sans", sans-serif;
    fill: #212830;
}

.jy {
    font: 900 47px "Noto Sans CJK SC", sans-serif;
}

.url {
    font-size: 31px;
    fill: #fff;
    opacity: 0.8;
}

.badge {
    position: absolute;
    right: 0;
    bottom: -3px;
    display: flex;
    align-items: center;
    gap: 6px;
    width: 200px;
    height: 95px;
    padding-left: 12px;
    background-color: #222f55;
    color: #dfe1e6;
}

.badge strong,
.badge span {
    display: block;
    white-space: nowrap;
}

.badge strong {
    font: 30px/34px "Noto Sans CJK SC", sans-serif;
}

.badge span {
    font-size: 24px;
    line-height: 26px;
}
```
